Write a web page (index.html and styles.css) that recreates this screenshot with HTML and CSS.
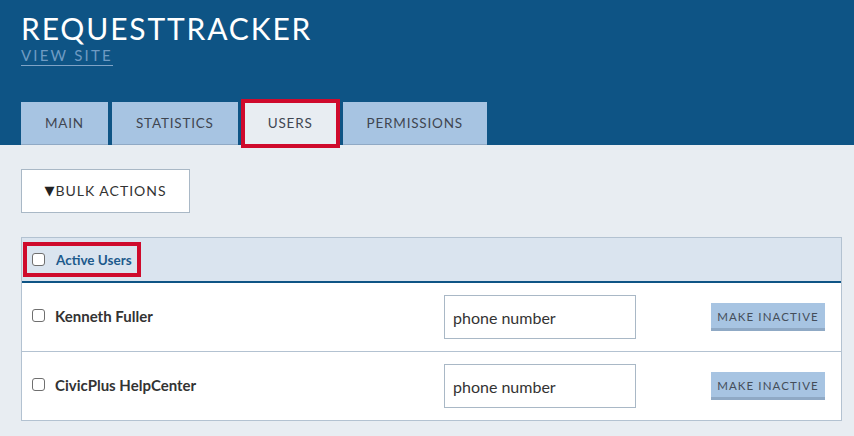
FILE: index.html
```html
<!DOCTYPE html>
<html>
<head>
<meta charset="utf-8">
<link rel="stylesheet" href="styles.css">
</head>
<body>
<header class="top">
  <h1 class="site-title">REQUESTTRACKER</h1>
  <a class="view-site" href="#">VIEW SITE</a>
  <nav class="tabs">
    <a class="tab" href="#">MAIN</a>
    <a class="tab" href="#">STATISTICS</a>
    <a class="tab active" href="#">USERS</a>
    <a class="tab" href="#">PERMISSIONS</a>
  </nav>
</header>
<main class="content">
  <button class="bulk"><span class="tri">&#9660;</span>BULK ACTIONS</button>
  <section class="table">
    <div class="thead">
      <label class="head-label"><span class="cb"></span><span>Active Users</span></label>
    </div>
    <div class="row">
      <label class="name"><span class="cb"></span><span>Kenneth Fuller</span></label>
      <input class="phone" type="text" placeholder="phone number">
      <button class="inactive">MAKE INACTIVE</button>
    </div>
    <div class="row">
      <label class="name"><span class="cb"></span><span>CivicPlus HelpCenter</span></label>
      <input class="phone" type="text" placeholder="phone number">
      <button class="inactive">MAKE INACTIVE</button>
    </div>
  </section>
</main>
</body>
</html>
```
FILE: styles.css
```css
* { box-sizing: border-box; }
html, body { margin: 0; padding: 0; }
body {
  background: #e8edf2;
  font-family: "Lato", "Noto Sans", sans-serif;
  color: #333;
}
.top {
  background: #0e5485;
  padding: 11px 21px 0;
  height: 145px;
  display: flex;
  flex-direction: column;
  align-items: flex-start;
}
.site-title {
  margin: 0;
  font-size: 30px;
  line-height: 34px;
  font-weight: 400;
  color: #fff;
  letter-spacing: 1.85px;
}
.view-site {
  margin-top: 1px;
  font-size: 15px;
  line-height: 18px;
  letter-spacing: 2.2px;
  color: #6f9bc3;
  text-decoration: none;
  border-bottom: 1px solid #7fa3c6;
  padding-bottom: 1px;
}
.tabs {
  margin-top: auto;
  display: flex;
  gap: 4px;
}
.tab {
  height: 43px;
  padding: 0 24px;
  display: flex;
  align-items: center;
  background: #a7c4e2;
  border-bottom: 1px solid #8fa9c5;
  color: #3f4651;
  font-size: 13.5px;
  letter-spacing: 0.8px;
  text-decoration: none;
}
.tab.active {
  background: #e8edf2;
  border-bottom-color: #e8edf2;
  outline: 4px solid #cf0a2c;
  outline-offset: -1px;
  margin: 0 2px;
}
.content {
  padding: 24px 12px 24px 21px;
}
.bulk {
  display: flex;
  align-items: center;
  justify-content: center;
  width: 169px;
  height: 44px;
  background: #fff;
  border: 1px solid #a9b8c6;
  font-family: inherit;
  font-size: 14px;
  letter-spacing: 1px;
  color: #333;
  padding: 0 0 1px;
}
.tri {
  font-family: "DejaVu Sans", sans-serif;
  font-size: 13px;
  letter-spacing: 0;
  margin-right: 1px;
  color: #222;
}
.table {
  margin-top: 24px;
  border: 1px solid #b3c2d1;
  background: #fff;
}
.thead {
  background: #dae4ef;
  height: 45px;
  border-bottom: 2px solid #0e5485;
  display: flex;
  align-items: center;
  padding-left: 1px;
}
.head-label {
  display: flex;
  align-items: center;
  gap: 11px;
  height: 35px;
  padding: 0 9px 0 9px;
  outline: 4px solid #cf0a2c;
  outline-offset: -4px;
  color: #1d5a8c;
  font-weight: 700;
  font-size: 13.5px;
}
.cb {
  width: 13px;
  height: 13px;
  border: 1px solid #6f6f6f;
  border-radius: 3px;
  background: #fff;
  flex: none;
}
.row {
  display: flex;
  align-items: center;
  padding: 12px 16px 12px 10px;
  border-top: 1px solid #b3c2d1;
}
.thead + .row { border-top: 0; }
.name {
  width: 412px;
  display: flex;
  align-items: center;
  gap: 10px;
  font-weight: 700;
  font-size: 15px;
  color: #333;
  padding-bottom: 3px;
}
.phone {
  width: 192px;
  height: 44px;
  border: 1px solid #a9b8c6;
  padding: 0 8px;
  font-family: inherit;
  font-size: 16px;
  color: #333;
  background: #fff;
}
.phone::placeholder { color: #333; opacity: 1; }
.inactive {
  margin-left: auto;
  width: 114px;
  height: 28px;
  background: #a7c4e2;
  border: 0;
  border-bottom: 3px solid #8fa9c5;
  font-family: inherit;
  font-size: 11.5px;
  letter-spacing: 1.1px;
  color: #444d59;
  padding: 1px 0 0;
}
```
